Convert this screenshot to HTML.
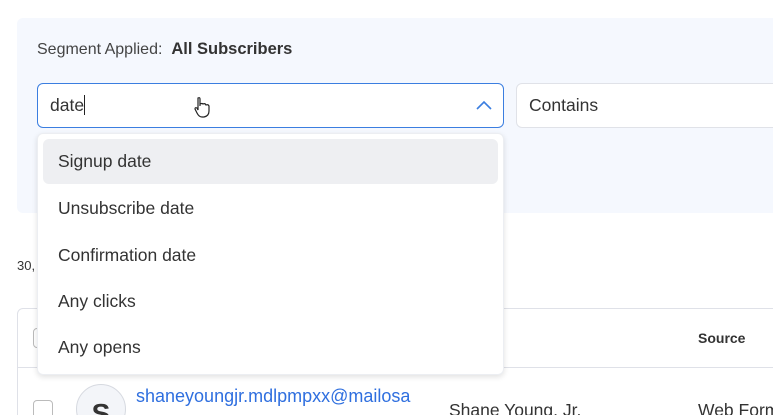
<!DOCTYPE html>
<html><head><style>
*{box-sizing:border-box;margin:0;padding:0}
html,body{width:773px;height:415px;overflow:hidden}
body{background:#fff;font-family:"Liberation Sans",sans-serif;color:#333;position:relative}
.a{position:absolute;white-space:nowrap}
.d{font-size:17.5px;color:#333}
</style></head><body>
<div class="a" style="left:17px;top:18px;width:800px;height:195px;background:#f5f8fe;border-radius:6px"></div>
<div class="a" style="left:37px;top:40px;font-size:16px;color:#444">Segment Applied:&nbsp; <b style="color:#333;font-size:16.5px">All Subscribers</b></div>
<div class="a" style="left:37px;top:83px;width:467px;height:45px;background:#fff;border:1px solid #3b7ee0;border-radius:6px"></div>
<div class="a d" style="left:50px;top:95px">date<span style="display:inline-block;width:1px;height:20px;background:#222;vertical-align:-4px"></span></div>
<svg class="a" style="left:475px;top:99px" width="18" height="12" viewBox="0 0 18 12"><path d="M2 10 L9 3 L16 10" fill="none" stroke="#3b7ee0" stroke-width="1.6"/></svg>
<svg class="a" style="left:193px;top:96px" width="18" height="22" viewBox="0 0 18 22"><path d="M5 2 q2-1 2 1 v7 v-2 q2-1 3 0 q2-1 3 1 q2-1 3 1 v5 q0 5-5 6 h-2 q-3 0-5-4 l-2-4 q0-2 2-1 l1 2 V3z" fill="#fff" stroke="#222" stroke-width="1.2"/></svg>
<div class="a" style="left:516px;top:83px;width:300px;height:45px;background:#fff;border:1px solid #e0e2e8;border-radius:6px"></div>
<div class="a d" style="left:529px;top:95px">Contains</div>
<div class="a" style="left:17px;top:258px;font-size:13px;color:#333">30,</div>
<div class="a" style="left:17px;top:308px;width:800px;height:120px;border:1px solid #dfe1e8;border-radius:6px"></div>
<div class="a" style="left:17px;top:367px;width:800px;height:1px;background:#dfe1e8"></div>
<div class="a" style="left:33px;top:328px;width:20px;height:20px;border:1px solid #bbb;border-radius:4px;background:#fff"></div>
<div class="a" style="left:698px;top:330px;font-size:14px;font-weight:bold;color:#333">Source</div>
<div class="a" style="left:33px;top:400px;width:20px;height:20px;border:1px solid #bbb;border-radius:4px;background:#fff"></div>
<div class="a" style="left:76px;top:384px;width:50px;height:50px;border:1px solid #d6d9e0;border-radius:50%;background:#f3f5f9;font-size:28px;font-weight:bold;text-align:center;line-height:58px;color:#333">S</div>
<div class="a" style="left:136px;top:386px;font-size:18px;color:#2f6fdf">shaneyoungjr.mdlpmpxx@mailosa</div>
<div class="a d" style="left:449px;top:400px">Shane Young, Jr.</div>
<div class="a d" style="left:698px;top:400px">Web Form</div>
<div class="a" style="left:37px;top:133px;width:467px;height:242px;background:#fff;border:1px solid #eceef2;border-radius:6px;box-shadow:0 2px 6px rgba(0,0,0,.12)"></div>
<div class="a" style="left:43px;top:139px;width:455px;height:45px;background:#eeeff2;border-radius:6px"></div>
<div class="a d" style="left:58px;top:151px">Signup date</div>
<div class="a d" style="left:58px;top:198px">Unsubscribe date</div>
<div class="a d" style="left:58px;top:245px">Confirmation date</div>
<div class="a d" style="left:58px;top:291px">Any clicks</div>
<div class="a d" style="left:58px;top:337px">Any opens</div>
</body></html>
